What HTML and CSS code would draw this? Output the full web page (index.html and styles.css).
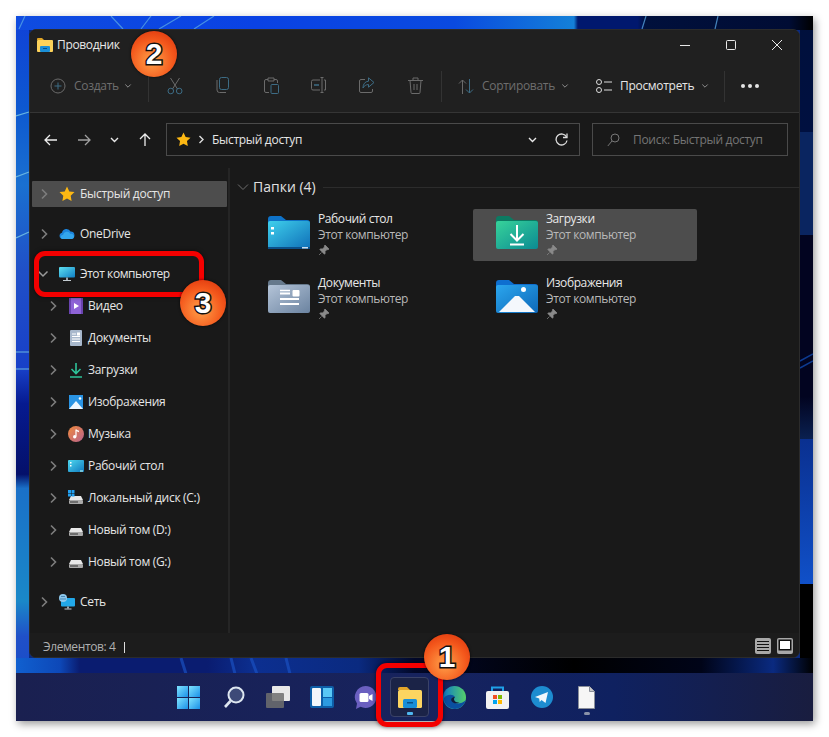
FILE: index.html
```html
<!DOCTYPE html>
<html lang="ru">
<head>
<meta charset="utf-8">
<title>Проводник</title>
<link rel="stylesheet" href="styles.css">
</head>
<body>
<svg class="defs" width="0" height="0">
<defs>
<symbol id="chev-r" viewBox="0 0 10 12"><path d="M3 1.500 7.500 6 3 10.500" fill="none" stroke="#7d7d7d" stroke-width="1.600"/></symbol>
<symbol id="chev-d" viewBox="0 0 12 10"><path d="M1.500 2.500 6 7l4.500-4.500" fill="none" stroke="#9a9a9a" stroke-width="1.500"/></symbol>
<symbol id="chev-w" viewBox="0 0 9 6"><path d="M1 1l3.500 3.500L8 1" fill="none" stroke="#e8e8e8" stroke-width="1.400"/></symbol>
<symbol id="star" viewBox="0 0 16 16"><path d="M8 .6l2.300 4.800 5.200.7-3.800 3.600.9 5.200L8 12.400l-4.600 2.500.9-5.200L.5 6.100l5.200-.7z" fill="#fdb813"/></symbol>
<symbol id="drive" viewBox="0 0 16 16"><path d="M3 6h10l2 4H1z" fill="#e8e8e8"/><rect x="1" y="10" width="14" height="4" rx="1" fill="#a9a9a9"/><rect x="2" y="11.500" width="8" height="1" fill="#333"/></symbol>
<symbol id="pin" viewBox="0 0 12 12"><path d="M7 1l4 4-1 .8-1-.3L7 7.600 7.200 9.500 6.400 10.200 1.800 5.600 2.500 4.800 4.500 5l2-2.100-.2-1z M3.500 8.500 1 11" fill="#8a8a8a" stroke="#8a8a8a" stroke-width=".7"/></symbol>
<symbol id="monitor" viewBox="0 0 16 16"><defs><linearGradient id="mg" x1="0" y1="0" x2="1" y2="1"><stop offset="0" stop-color="#5fe0f0"/><stop offset="1" stop-color="#0f7fc4"/></linearGradient></defs><rect x="0" y="1" width="16" height="10.500" rx="1" fill="url(#mg)"/><rect x="7" y="11.500" width="2" height="2.500" fill="#9aa5ad"/><rect x="4" y="14" width="8" height="1" fill="#c4ccd2"/></symbol>
</defs>
</svg>

<div class="desktop">
  <svg class="wallpaper" width="797" height="705" viewBox="0 0 797 705">
    <defs>
      <linearGradient id="w-top" x1="0" y1="0" x2="797" y2="0" gradientUnits="userSpaceOnUse">
        <stop offset="0" stop-color="#0f4ce0"/><stop offset=".3" stop-color="#0a42e4"/><stop offset=".55" stop-color="#0a4ae0"/><stop offset=".7" stop-color="#1480d8"/><stop offset=".705" stop-color="#00186e"/><stop offset=".78" stop-color="#00186e"/><stop offset=".79" stop-color="#00103c"/><stop offset=".97" stop-color="#000c34"/><stop offset="1" stop-color="#000"/>
      </linearGradient>
      <linearGradient id="w-left" x1="0" y1="0" x2="0" y2="705" gradientUnits="userSpaceOnUse">
        <stop offset="0" stop-color="#1040d8"/><stop offset=".13" stop-color="#0d58d0"/><stop offset=".24" stop-color="#1a70d0"/><stop offset=".36" stop-color="#2050c8"/><stop offset=".5" stop-color="#1840c8"/><stop offset=".55" stop-color="#061a90"/><stop offset=".65" stop-color="#04106a"/><stop offset=".67" stop-color="#1a70c8"/><stop offset=".83" stop-color="#1a88c8"/><stop offset=".88" stop-color="#2050c8"/><stop offset="1" stop-color="#1048c8"/>
      </linearGradient>
      <linearGradient id="w-right" x1="0" y1="0" x2="0" y2="705" gradientUnits="userSpaceOnUse">
        <stop offset="0" stop-color="#00103c"/><stop offset=".165" stop-color="#001040"/><stop offset=".165" stop-color="#0a2560"/><stop offset=".31" stop-color="#0a2560"/><stop offset=".31" stop-color="#020420"/><stop offset=".54" stop-color="#020420"/><stop offset=".6" stop-color="#0a2050"/><stop offset=".6" stop-color="#0a3090"/><stop offset=".805" stop-color="#1050c8"/><stop offset=".805" stop-color="#000"/><stop offset="1" stop-color="#000"/>
      </linearGradient>
      <linearGradient id="w-bottom" x1="0" y1="0" x2="797" y2="0" gradientUnits="userSpaceOnUse">
        <stop offset="0" stop-color="#1060d0"/><stop offset=".055" stop-color="#0d48b8"/><stop offset=".08" stop-color="#0a1c70"/><stop offset=".24" stop-color="#0a1c70"/><stop offset=".3" stop-color="#0c2f90"/><stop offset=".43" stop-color="#0a2a80"/><stop offset=".5" stop-color="#020828"/><stop offset=".7" stop-color="#000"/><stop offset=".86" stop-color="#000418"/><stop offset=".95" stop-color="#0a2a80"/><stop offset="1" stop-color="#000"/>
      </linearGradient>
    </defs>
    <rect x="0" y="0" width="13" height="660" fill="url(#w-left)"/>
    <rect x="784" y="0" width="13" height="660" fill="url(#w-right)"/>
    <rect x="0" y="0" width="797" height="14" fill="url(#w-top)"/>
    <rect x="0" y="642" width="797" height="16" fill="url(#w-bottom)"/>
    <path d="M0 100l13-4M0 161l13-5M0 222l13-6M0 336h13M0 353h13" stroke="#68b4e0" stroke-width="1.200" fill="none"/>
    <path d="M95 0l12 13M135 0l-10 13M165 0l-22 13M178 13l20-13M3 13l6-13M630 0l-4 13M702 0l-3 13" stroke="#5aa8e4" stroke-width="1.200" fill="none" opacity=".75"/>
    <path d="M784 345l13-7M784 352l13-7" stroke="#0d3a90" stroke-width="1.500" fill="none"/>
    <path d="M165 642l5 16M215 642l4 16M235 642l6 16M270 642l4 16" stroke="#1a50c0" stroke-width="3" fill="none" opacity=".7"/>
  </svg>
  <section class="window">
    <header class="titlebar">
      <svg class="title-icon" width="16" height="16" viewBox="0 0 16 16"><path d="M0 2a1 1 0 0 1 1-1h4l2 2H0z" fill="#e0a526"/><rect y="3" width="16" height="12" rx="1" fill="#fcd25a"/><rect x="3" y="9" width="10" height="6" rx="1" fill="#1a8fd8"/><rect x="6" y="11" width="4" height="1" fill="#0a4f85"/></svg>
      <span class="title-text">Проводник</span>
      <div class="win-controls">
        <svg width="46" height="12" viewBox="0 0 46 12"><path d="M18 6.500h10" stroke="#e8e8e8" stroke-width="1"/></svg>
        <svg width="46" height="12" viewBox="0 0 46 12"><rect x="18.500" y="1.500" width="9" height="9" rx="1" fill="none" stroke="#e8e8e8"/></svg>
        <svg width="46" height="12" viewBox="0 0 46 12"><path d="M18 1l10 10M28 1 18 11" stroke="#e8e8e8" stroke-width="1"/></svg>
      </div>
    </header>

    <div class="toolbar">
      <div class="tool tool-create">
        <svg width="16" height="16" viewBox="0 0 16 16"><circle cx="8" cy="8" r="7" fill="none" stroke="#6b6b6b"/><path d="M8 4.500v7M4.500 8h7" stroke="#3d6c85"/></svg>
        <span class="muted">Создать</span>
        <svg class="tiny" width="8" height="6"><use href="#chev-d"/></svg>
      </div>
      <i class="sep sep-a"></i>
      <div class="tool-icons">
        <span class="icon-btn"><svg width="16" height="18" viewBox="0 0 16 18"><path d="M3.500 1 10.500 12M12.500 1 5.500 12" stroke="#6b6b6b" fill="none"/><circle cx="3.800" cy="14" r="2.800" fill="none" stroke="#3d6c85"/><circle cx="12.200" cy="14" r="2.800" fill="none" stroke="#3d6c85"/></svg></span>
        <span class="icon-btn"><svg width="14" height="16" viewBox="0 0 14 16"><rect x="3.500" y=".5" width="9" height="12" rx="2" fill="none" stroke="#3d6c85"/><path d="M1 3v10a2.500 2.500 0 0 0 2.500 2.500H10" fill="none" stroke="#6b6b6b"/></svg></span>
        <span class="icon-btn"><svg width="15" height="17" viewBox="0 0 15 17"><path d="M4 2.500H2A1.500 1.500 0 0 0 .5 4v10A1.500 1.500 0 0 0 2 15.500h3M10 2.500h2A1.500 1.500 0 0 1 13.500 4v2M4 1h6v3H4z" fill="none" stroke="#6b6b6b"/><rect x="7" y="7.500" width="7.500" height="9" rx="1" fill="none" stroke="#3d6c85"/></svg></span>
        <span class="icon-btn"><svg width="16" height="16" viewBox="0 0 16 16"><path d="M9 3H2a1.500 1.500 0 0 0-1.500 1.500v7A1.500 1.500 0 0 0 2 13h7" fill="none" stroke="#6b6b6b"/><path d="M3 8h5" stroke="#3d6c85" stroke-width="1.500"/><path d="M11 .5v15M9.500.5h3M9.500 15.500h3M13 3h1.500v10H13" fill="none" stroke="#6b6b6b"/></svg></span>
        <span class="icon-btn"><svg width="16" height="16" viewBox="0 0 16 16"><path d="M6 2.500H2A1.500 1.500 0 0 0 .5 4v10A1.500 1.500 0 0 0 2 15.500h10a1.500 1.500 0 0 0 1.500-1.500v-2" fill="none" stroke="#6b6b6b"/><path d="M9.500.8 15 5.500l-5.500 4.700V7.500C7 7.500 5 9 4 11c0-4 2-6.500 5.500-6.800z" fill="none" stroke="#3d6c85"/></svg></span>
        <span class="icon-btn"><svg width="15" height="17" viewBox="0 0 15 17"><path d="M0 3.500h15M5 3.500V1h5v2.500M2 3.500l1 12a1 1 0 0 0 1 1h7a1 1 0 0 0 1-1l1-12M6 7v6M9 7v6" fill="none" stroke="#6b6b6b"/></svg></span>
      </div>
      <i class="sep sep-b"></i>
      <div class="tool tool-sort">
        <svg width="16" height="15" viewBox="0 0 16 15"><path d="M4.500 15V1M1 4.500 4.500 1 8 4.500" fill="none" stroke="#6b6b6b"/><path d="M11.500 0v14M8 10.500l3.500 3.500 3.500-3.500" fill="none" stroke="#3d6c85"/></svg>
        <span class="muted">Сортировать</span>
        <svg class="tiny" width="8" height="6"><use href="#chev-d"/></svg>
      </div>
      <div class="tool tool-view">
        <svg width="16" height="14" viewBox="0 0 16 14"><rect x=".5" y=".5" width="5" height="5" rx="2.500" fill="none" stroke="#ddd"/><rect x=".5" y="8.500" width="5" height="5" rx="2.500" fill="none" stroke="#ddd"/><path d="M8 3h8M8 11h8" stroke="#ddd"/></svg>
        <span class="strong">Просмотреть</span>
        <svg class="tiny" width="8" height="6"><use href="#chev-d"/></svg>
      </div>
      <i class="sep sep-c"></i>
      <div class="more"><b></b><b></b><b></b></div>
    </div>

    <div class="addressbar">
      <div class="nav-buttons">
        <svg width="13" height="12" viewBox="0 0 13 12"><path d="M13 6H1M6 1 1 6l5 5" fill="none" stroke="#eee" stroke-width="1.300"/></svg>
        <svg class="nb-fwd" width="13" height="12" viewBox="0 0 13 12"><path d="M0 6h12M7 1l5 5-5 5" fill="none" stroke="#a0a0a0" stroke-width="1.300"/></svg>
        <svg class="nb-down" width="9" height="6"><use href="#chev-w"/></svg>
        <svg class="nb-up" width="12" height="13" viewBox="0 0 12 13"><path d="M6 13V1M1 6l5-5 5 5" fill="none" stroke="#eee" stroke-width="1.300"/></svg>
      </div>
      <div class="address">
        <svg width="15" height="15"><use href="#star"/></svg>
        <svg class="addr-chev" width="7" height="9" viewBox="0 0 7 9"><path d="M1.500 1 5 4.500 1.500 8" fill="none" stroke="#ddd" stroke-width="1.400"/></svg>
        <span class="addr-text">Быстрый доступ</span>
        <svg class="addr-down" width="9" height="6"><use href="#chev-w"/></svg>
        <svg class="addr-refresh" width="13" height="13" viewBox="0 0 13 13"><path d="M11.500 4A5.500 5.500 0 1 0 12 7.500" fill="none" stroke="#ddd" stroke-width="1.300"/><path d="M12 .5v4H8" fill="none" stroke="#ddd" stroke-width="1.300"/></svg>
      </div>
      <div class="search">
        <svg width="13" height="14" viewBox="0 0 13 14"><circle cx="8" cy="5" r="4" fill="none" stroke="#777"/><path d="M5 8 .8 13" stroke="#777"/></svg>
        <span>Поиск: Быстрый доступ</span>
      </div>
    </div>

    <div class="main">
      <nav class="sidebar">
        <div class="row top selected"><svg class="chev" width="10" height="12"><use href="#chev-r"/></svg><svg class="ico" width="16" height="16"><use href="#star"/></svg><span>Быстрый доступ</span></div>
        <div class="row top"><svg class="chev" width="10" height="12"><use href="#chev-r"/></svg><svg class="ico" width="16" height="16" viewBox="0 0 16 16"><path d="M3.500 13A3.200 3.200 0 0 1 3 6.700 4.500 4.500 0 0 1 11.500 5.500a3.800 3.800 0 0 1 1 7.500z" fill="#1c84dc"/><path d="M3.500 13a2 2 0 0 1 .5-4 4 4 0 0 1 7.500-1 2.700 2.700 0 0 1 3.500 2.800A2.300 2.300 0 0 1 13 13z" fill="#33a6ee"/></svg><span>OneDrive</span></div>
        <div class="row top"><svg class="chev" width="12" height="10"><use href="#chev-d"/></svg><svg class="ico" width="16" height="16"><use href="#monitor"/></svg><span class="tight">Этот компьютер</span></div>

        <div class="row child"><svg class="chev" width="10" height="12"><use href="#chev-r"/></svg><svg class="ico" width="16" height="16" viewBox="0 0 16 16"><rect x="1" y="0" width="14" height="16" rx="1" fill="#8e63d6"/><rect x="1" y="0" width="2" height="16" fill="#6a44b0"/><rect x="13" y="0" width="2" height="16" fill="#6a44b0"/><path d="M6 5l5 3-5 3z" fill="#fff"/></svg><span>Видео</span></div>
        <div class="row child"><svg class="chev" width="10" height="12"><use href="#chev-r"/></svg><svg class="ico" width="16" height="16" viewBox="0 0 16 16"><rect x="2" y="0" width="12" height="16" rx="1" fill="#a8b8cc"/><path d="M4 4h4M4 6.500h8M4 9h8M4 11.500h8" stroke="#fff"/><rect x="9" y="2.500" width="3" height="3" fill="#fff"/></svg><span>Документы</span></div>
        <div class="row child"><svg class="chev" width="10" height="12"><use href="#chev-r"/></svg><svg class="ico" width="16" height="16" viewBox="0 0 16 16"><path d="M8 1v10M3.500 7 8 11.500 12.500 7" fill="none" stroke="#2ec39a" stroke-width="1.600"/><path d="M2 15h12" stroke="#2ec39a" stroke-width="1.500"/></svg><span>Загрузки</span></div>
        <div class="row child"><svg class="chev" width="10" height="12"><use href="#chev-r"/></svg><svg class="ico" width="16" height="16" viewBox="0 0 16 16"><rect x="1" y="1" width="14" height="14" fill="#2a94e4"/><path d="M1 15l7-8 7 8z" fill="#eef7ff"/><circle cx="12" cy="4.500" r="1.300" fill="#fff"/></svg><span>Изображения</span></div>
        <div class="row child"><svg class="chev" width="10" height="12"><use href="#chev-r"/></svg><svg class="ico" width="16" height="16" viewBox="0 0 16 16"><defs><linearGradient id="mus" x1="0" y1="0" x2="1" y2="1"><stop offset="0" stop-color="#f08a3c"/><stop offset="1" stop-color="#b8628e"/></linearGradient></defs><circle cx="8" cy="8" r="8" fill="url(#mus)"/><path d="M8 3.500v7" stroke="#fff" stroke-width="1.200"/><circle cx="6.700" cy="10.800" r="1.700" fill="#fff"/><path d="M8 3.500l3 1.200v1.500L8 5z" fill="#fff"/></svg><span>Музыка</span></div>
        <div class="row child"><svg class="chev" width="10" height="12"><use href="#chev-r"/></svg><svg class="ico" width="16" height="16" viewBox="0 0 16 16"><defs><linearGradient id="dsk" x1="0" y1="0" x2="1" y2="1"><stop offset="0" stop-color="#4fd8ee"/><stop offset="1" stop-color="#0f7ac0"/></linearGradient></defs><rect y="2" width="16" height="12" rx="1" fill="url(#dsk)"/><rect x="2" y="4" width="1.500" height="1.500" fill="#fff"/><rect x="2" y="7" width="1.500" height="1.500" fill="#fff"/><rect x="12" y="12.500" width="3" height="1" fill="#cfe"/></svg><span>Рабочий стол</span></div>
        <div class="row child"><svg class="chev" width="10" height="12"><use href="#chev-r"/></svg><svg class="ico" width="16" height="16" viewBox="0 0 16 16"><use href="#drive"/><rect x="0" y="0" width="3" height="3" fill="#22a0f0"/><rect x="3.500" y="0" width="3" height="3" fill="#22a0f0"/><rect x="0" y="3.500" width="3" height="3" fill="#22a0f0"/><rect x="3.500" y="3.500" width="3" height="3" fill="#22a0f0"/></svg><span>Локальный диск (C:)</span></div>
        <div class="row child"><svg class="chev" width="10" height="12"><use href="#chev-r"/></svg><svg class="ico" width="16" height="16"><use href="#drive"/></svg><span>Новый том (D:)</span></div>
        <div class="row child"><svg class="chev" width="10" height="12"><use href="#chev-r"/></svg><svg class="ico" width="16" height="16"><use href="#drive"/></svg><span>Новый том (G:)</span></div>
        <div class="row top"><svg class="chev" width="10" height="12"><use href="#chev-r"/></svg><svg class="ico" width="16" height="16" viewBox="0 0 16 16"><rect x="2" y="4" width="14" height="8.500" rx="1" fill="#22a8e8"/><rect x="8" y="12.500" width="2" height="2" fill="#9aa5ad"/><rect x="5.500" y="14.500" width="7" height="1" fill="#c4ccd2"/><circle cx="4" cy="4" r="4" fill="#8ec8ec"/><path d="M2 2.500h4M1 5h6" stroke="#2c6f9e" stroke-width=".7"/></svg><span>Сеть</span></div>
      </nav>

      <div class="content">
        <div class="group-head">
          <svg width="12" height="8" viewBox="0 0 12 8"><path d="M1 1.500 6 6.500l5-5" fill="none" stroke="#6e6e6e"/></svg>
          <span>Папки (4)</span>
          <i></i>
        </div>
        <div class="tiles">
          <article class="tile">
            <svg class="folder" width="42" height="34" viewBox="0 0 42 34"><defs><linearGradient id="f1" x1="0" y1="0" x2="1" y2="1"><stop offset="0" stop-color="#3fd0ec"/><stop offset="1" stop-color="#0f6fb8"/></linearGradient></defs><path d="M0 3a3 3 0 0 1 3-3h10l5 4h21a3 3 0 0 1 3 3v2H0z" fill="#0e72c8"/><rect y="5" width="42" height="28" rx="2" fill="url(#f1)"/><rect x="3" y="11" width="3" height="2.500" fill="#fff"/><rect x="3" y="16" width="3" height="2.500" fill="#fff"/><rect y="31" width="42" height="2" fill="#0a4f8a"/><rect x="34" y="31" width="6" height="1.500" fill="#cde"/></svg>
            <div class="tile-text"><strong>Рабочий стол</strong><span>Этот компьютер</span><svg width="12" height="12"><use href="#pin"/></svg></div>
          </article>
          <article class="tile active">
            <svg class="folder" width="42" height="34" viewBox="0 0 42 34"><defs><linearGradient id="f2" x1="0" y1="0" x2="1" y2="1"><stop offset="0" stop-color="#37d39a"/><stop offset="1" stop-color="#0b8a92"/></linearGradient></defs><path d="M0 3a3 3 0 0 1 3-3h10l5 4h21a3 3 0 0 1 3 3v2H0z" fill="#0c7a62"/><rect y="5" width="42" height="28" rx="2" fill="url(#f2)"/><path d="M21 9v15M14.500 18l6.500 6.500 6.500-6.500" fill="none" stroke="#fff" stroke-width="2"/><path d="M14 28.500h14" stroke="#fff" stroke-width="2"/></svg>
            <div class="tile-text"><strong>Загрузки</strong><span>Этот компьютер</span><svg width="12" height="12"><use href="#pin"/></svg></div>
          </article>
          <article class="tile">
            <svg class="folder" width="42" height="34" viewBox="0 0 42 34"><defs><linearGradient id="f3" x1="0" y1="0" x2="1" y2="1"><stop offset="0" stop-color="#b4c4d8"/><stop offset="1" stop-color="#6b83a0"/></linearGradient></defs><path d="M0 3a3 3 0 0 1 3-3h10l5 4h21a3 3 0 0 1 3 3v2H0z" fill="#66798c"/><rect y="5" width="42" height="28" rx="2" fill="url(#f3)"/><path d="M12 13.500h10M12 19h19M12 24h19" stroke="#fff" stroke-width="2"/><rect x="24.500" y="10" width="7" height="6.500" rx="1" fill="#fff"/><path d="M12 10.500h10" stroke="#fff" stroke-width="1.500"/></svg>
            <div class="tile-text"><strong>Документы</strong><span>Этот компьютер</span><svg width="12" height="12"><use href="#pin"/></svg></div>
          </article>
          <article class="tile">
            <svg class="folder" width="42" height="34" viewBox="0 0 42 34"><defs><linearGradient id="f4" x1="0" y1="0" x2="1" y2="1"><stop offset="0" stop-color="#2ba6ee"/><stop offset="1" stop-color="#0d68b8"/></linearGradient></defs><path d="M0 3a3 3 0 0 1 3-3h10l5 4h21a3 3 0 0 1 3 3v2H0z" fill="#0e6fd0"/><rect y="5" width="42" height="28" rx="2" fill="url(#f4)"/><path d="M3 32 19 16h4l16 16z" fill="#f4f8fc"/><circle cx="27.500" cy="9.500" r="2.500" fill="#fff"/></svg>
            <div class="tile-text"><strong>Изображения</strong><span>Этот компьютер</span><svg width="12" height="12"><use href="#pin"/></svg></div>
          </article>
        </div>
      </div>
    </div>

    <footer class="statusbar">
      <span>Элементов: 4</span><i></i>
      <div class="view-toggle">
        <svg width="16" height="16" viewBox="0 0 16 16"><rect width="16" height="16" rx="2" fill="#a8a8a8"/><path d="M2 3.500h12M2 6.500h12M2 9.500h12M2 12.500h12" stroke="#111"/></svg>
        <svg width="16" height="16" viewBox="0 0 16 16"><rect width="16" height="16" rx="2" fill="#a8a8a8"/><rect x="2" y="2" width="12" height="10" fill="#111" stroke="#111"/><rect x="3" y="3" width="10" height="8" fill="#fff"/></svg>
      </div>
    </footer>
  </section>

  <div class="taskbar">
    <svg width="23" height="23" viewBox="0 0 23 23"><defs><linearGradient id="st" x1="0" y1="0" x2="1" y2="1"><stop offset="0" stop-color="#7fe3ff"/><stop offset="1" stop-color="#1a90e8"/></linearGradient></defs><rect width="11" height="11" fill="url(#st)"/><rect x="12" width="11" height="11" fill="url(#st)"/><rect y="12" width="11" height="11" fill="url(#st)"/><rect x="12" y="12" width="11" height="11" fill="url(#st)"/></svg>
    <svg class="tb-search" width="22" height="23" viewBox="0 0 22 23"><circle cx="13" cy="9" r="7.500" fill="#3d4a78" stroke="#dde6f0" stroke-width="2"/><path d="M7.500 15 2 21" stroke="#dde6f0" stroke-width="2.600"/></svg>
    <svg class="tb-view" width="24" height="22" viewBox="0 0 24 22"><rect x="6" width="18" height="15" rx="1" fill="#e8e8e8"/><rect y="7" width="18" height="15" rx="1" fill="#6f6f6f" fill-opacity=".85"/></svg>
    <svg class="tb-widgets" width="24" height="22" viewBox="0 0 24 22"><rect width="24" height="22" rx="2" fill="#0d5ea8"/><rect x="2" y="2" width="9" height="18" rx="1" fill="#f2f6fa"/><rect x="13" y="2" width="9" height="9" fill="#5ac8f5"/><rect x="13" y="12" width="9" height="8" fill="#2c9ae0"/></svg>
    <svg class="tb-chat" width="23" height="23" viewBox="0 0 23 23"><path d="M11.500 0a11 11 0 1 1-5 20.800L2 23l1-5.500A11 11 0 0 1 11.500 0z" fill="#6a5fc0"/><rect x="5.500" y="7" width="9" height="9" rx="1.500" fill="#fff"/><path d="M15 10l3.500-2v7L15 13z" fill="#fff"/></svg>
    <div class="tb-active">
      <svg width="24" height="21" viewBox="0 0 24 21"><path d="M0 2a2 2 0 0 1 2-2h7l3 3H0z" fill="#e3a52a"/><rect y="3" width="24" height="18" rx="1.500" fill="#fcd561"/><rect x="5" y="12" width="14" height="9" rx="1.500" fill="#1a8fd8"/><rect x="9" y="15" width="6" height="1.500" fill="#0a4f85"/></svg>
      <i></i>
    </div>
    <svg class="tb-edge" width="23" height="23" viewBox="0 0 23 23"><defs><linearGradient id="ed" x1="0" y1="0" x2="1" y2="0"><stop offset="0" stop-color="#0d78c8"/><stop offset="1" stop-color="#55d06a"/></linearGradient></defs><circle cx="11.500" cy="11.500" r="11.500" fill="url(#ed)"/><path d="M23 14c-2 6-7 9-11 9C7 23 1 19 1 12c3-4 9-4 11-1-3 0-4 2-3 4 2 3 9 4 14-1z" fill="#0a4fa0"/><path d="M12 11c-3 0-4.500 2-3.500 4 1.500 2.500 5 3 8 1.500-3 .5-5-1-5.500-3 0-1 .5-2 1-2.500z" fill="#111b3d"/></svg>
    <svg class="tb-store" width="23" height="23" viewBox="0 0 23 23"><path d="M6 5V1.500h11V5" fill="none" stroke="#1fa0e8" stroke-width="2"/><rect y="5" width="23" height="18" rx="2" fill="#f2f2f2"/><rect x="7" y="9" width="4" height="4" fill="#f25022"/><rect x="12" y="9" width="4" height="4" fill="#7fba00"/><rect x="7" y="14" width="4" height="4" fill="#00a4ef"/><rect x="12" y="14" width="4" height="4" fill="#ffb900"/></svg>
    <svg class="tb-tg" width="22" height="22" viewBox="0 0 22 22"><circle cx="11" cy="11" r="11" fill="#1d8cd0"/><path d="M4 11 17 6l-2.500 11-4-3-1.800 2-.5-3.500z" fill="#f2f8fc"/></svg>
    <div class="tb-file">
      <svg width="17" height="23" viewBox="0 0 17 23"><path d="M.5.500h11l5 5v17H.500z" fill="#f6f6f6" stroke="#8a8f9a"/><path d="M11.500.5v5h5" fill="#c8c8c8" stroke="#8a8f9a"/></svg>
      <i></i>
    </div>
  </div>
</div>

<div class="callout call-1"></div>
<div class="callout call-3"></div>
<div class="badge badge-1">1</div>
<div class="badge badge-2">2</div>
<div class="badge badge-3">3</div>
</body>
</html>
```
FILE: styles.css
```css
* { box-sizing: border-box; }
html, body { margin: 0; }
body {
  position: relative;
  width: 829px;
  height: 737px;
  padding: 16px;
  background: #fff;
  overflow: hidden;
  font: 12px/16px "Open Sans", "Noto Sans", sans-serif;
  color: #e6e6e6;
}
.defs { position: absolute; }
svg { display: block; flex: none; }
i { display: block; }

.desktop {
  position: relative;
  width: 797px;
  height: 705px;
  padding: 13px 13px 0;
  display: flex;
  flex-direction: column;
  box-shadow: 2px 3px 8px rgba(0,0,0,.4);
  background: #0a2a80;
}
.wallpaper { position: absolute; left: 0; top: 0; }

.window {
  position: relative;
  height: 629px;
  flex: none;
  display: flex;
  flex-direction: column;
  background: #191919;
  border-radius: 7px;
  border: 1px solid #2b2b2b;
  overflow: hidden;
}

.titlebar {
  height: 30px;
  flex: none;
  display: flex;
  align-items: center;
  padding-left: 7px;
  background: #202020;
}
.title-text { margin-left: 4px; color: #e8e8e8; letter-spacing: -.35px; }
.win-controls { margin-left: auto; margin-right: -1px; display: flex; }

.toolbar {
  height: 53px;
  flex: none;
  display: flex;
  align-items: center;
  background: #202020;
  border-bottom: 1px solid #353535;
}
.tool { display: flex; align-items: center; flex: none; }
.tool-create { margin-left: 20px; width: 98px; }
.tool-create span { margin-left: 8px; }
.tool .tiny { margin-left: 7px; }
.tool-create .tiny { margin-left: 5px; }
.muted { color: #6e6e6e; letter-spacing: -.3px; }
.strong { color: #e6e6e6; letter-spacing: -.3px; }
.sep { width: 1px; height: 31px; background: #333; flex: none; }
.tool-icons { display: flex; margin-left: 2px; }
.icon-btn { width: 48px; display: flex; justify-content: center; }
.sep-b { margin-left: 2px; }
.tool-sort { margin-left: 16px; width: 121px; }
.tool-sort span { margin-left: 8px; }
.tool-sort .tiny { margin-left: 6px; }
.tool-view { margin-left: 17px; width: 111px; }
.tool-view span { margin-left: 8px; }
.sep-c { margin-left: 17px; }
.more { margin-left: 16px; display: flex; gap: 3px; }
.more b { display: block; width: 4px; height: 4px; border-radius: 50%; background: #e4e4e4; }

.addressbar {
  height: 55px;
  flex: none;
  display: flex;
  align-items: flex-start;
  padding-top: 10px;
  background: #191919;
}
.nav-buttons { width: 136px; height: 33px; display: flex; align-items: center; padding-left: 14px; }
.nb-fwd { margin-left: 21px; }
.nb-down { margin-left: 19px; }
.nb-up { margin-left: 20px; }
.address {
  width: 414px;
  height: 33px;
  display: flex;
  align-items: center;
  padding-left: 9px;
  border: 1px solid #4a4a4a;
  flex: none;
}
.addr-chev { margin-left: 7px; }
.addr-text { margin-left: 7px; letter-spacing: -.3px; }
.addr-down { margin-left: auto; }
.addr-refresh { margin-left: 18px; margin-right: 11px; }
.search {
  margin-left: 12px;
  width: 196px;
  height: 33px;
  display: flex;
  align-items: center;
  padding-left: 14px;
  border: 1px solid #4a4a4a;
  color: #757575;
  letter-spacing: -.3px;
  flex: none;
}
.search span { margin-left: 13px; white-space: nowrap; }

.main { flex: 1; min-height: 0; display: flex; }

.sidebar {
  width: 200px;
  flex: none;
  padding-top: 10px;
  border-right: 2px solid #252525;
}
.row {
  height: 32px;
  display: flex;
  align-items: center;
  margin: 0 1px 0 2px;
  letter-spacing: -.3px;
  position: relative;
  white-space: nowrap;
}
.row.top { margin-top: 8px; padding-left: 7px; }
.row.top:first-child { margin-top: 0; }
.row.top .ico { margin-left: 10px; }
.row.top span { margin-left: 5px; }
.row .tight { letter-spacing: -.42px; }
.row.child { padding-left: 16px; }
.row.child .ico { margin-left: 10px; }
.row.child span { margin-left: 4px; }
.row.top .chev[width="12"] { margin-left: -2px; }
.row.selected::before {
  content: "";
  position: absolute;
  inset: 3px 0;
  background: #4d4d4d;
  border-radius: 1px;
}
.row.selected > * { position: relative; }

.content { flex: 1; min-width: 0; padding: 11px 0 0 7px; }
.group-head { display: flex; align-items: center; height: 16px; font-size: 14px; }
.group-head span { margin-left: 4px; letter-spacing: 0; color: #e0e0e0; }
.group-head i { flex: 1; height: 1px; background: #2c2c2c; margin-left: 7px; }

.tiles {
  display: grid;
  grid-template-columns: 224px 224px;
  grid-auto-rows: 52px;
  gap: 12px 4px;
  margin: 14px 0 0 8px;
}
.tile { display: flex; padding: 7px 0 0 23px; border-radius: 2px; }
.tile.active { background: #4d4d4d; }
.tile-text { margin-left: 8px; margin-top: -5px; display: flex; flex-direction: column; letter-spacing: -.4px; }
.tile-text strong { font-weight: 400; color: #e8e8e8; }
.tile-text span { color: #b8b8b8; }
.tile-text svg { margin-top: 1px; }

.statusbar {
  height: 24px;
  flex: none;
  display: flex;
  align-items: center;
  padding: 4px 0 0 13px;
  background: #1c1c1c;
  color: #b0b0b0;
  letter-spacing: -.4px;
}
.statusbar i { width: 1px; height: 11px; background: #ddd; margin-left: 9px; }
.view-toggle { margin-left: auto; margin-right: 6px; margin-bottom: 2px; display: flex; gap: 6px; }

.taskbar {
  position: relative;
  margin: 15px -13px 0;
  height: 48px;
  flex: none;
  display: flex;
  align-items: center;
  padding-left: 161px;
  background: linear-gradient(90deg, #1a2050 0%, #17235e 50%, #0f2160 75%, #191d3f 100%);
}
.tb-search { margin-left: 23px; }
.tb-view { margin-left: 21px; }
.tb-widgets { margin-left: 20px; }
.tb-chat { margin-left: 20px; }
.tb-active {
  margin-left: 13px;
  width: 39px;
  height: 40px;
  display: flex;
  flex-direction: column;
  align-items: center;
  padding-top: 9px;
  border: 1px solid #3a4268;
  border-radius: 4px;
  background: #1b2347;
}
.tb-active i { width: 6px; height: 3px; margin-top: 4px; background: #4fb8f0; border-radius: 1px; }
.tb-edge { margin-left: 14px; }
.tb-store { margin-left: 20px; }
.tb-tg { margin-left: 22px; }
.tb-file { margin-left: 25px; position: relative; }
.tb-file i { position: absolute; left: 6px; top: 26px; width: 6px; height: 3px; background: #8a92a8; border-radius: 2px; }

.callout {
  position: absolute;
  border: 5px solid #f40000;
  border-radius: 11px;
  box-shadow: 0 0 4px rgba(0,0,0,.6);
}
.call-1 { left: 376px; top: 663px; width: 67px; height: 64px; }
.call-3 { left: 34px; top: 251px; width: 170px; height: 46px; }

.badge {
  position: absolute;
  width: 46px;
  height: 46px;
  border-radius: 50%;
  background: radial-gradient(circle at 45% 65%, #ffa14a 0%, #f4581c 55%, #d42a08 100%);
  box-shadow: 0 0 3px rgba(0,0,0,.7);
  text-align: center;
  font: 700 30px/46px "Liberation Sans", Arial, sans-serif;
  color: #fff;
  -webkit-text-stroke: 3px #111;
  paint-order: stroke fill;
}
.badge-1 { left: 424px; top: 634px; }
.badge-2 { left: 131px; top: 31px; }
.badge-3 { left: 180px; top: 280px; }
```
